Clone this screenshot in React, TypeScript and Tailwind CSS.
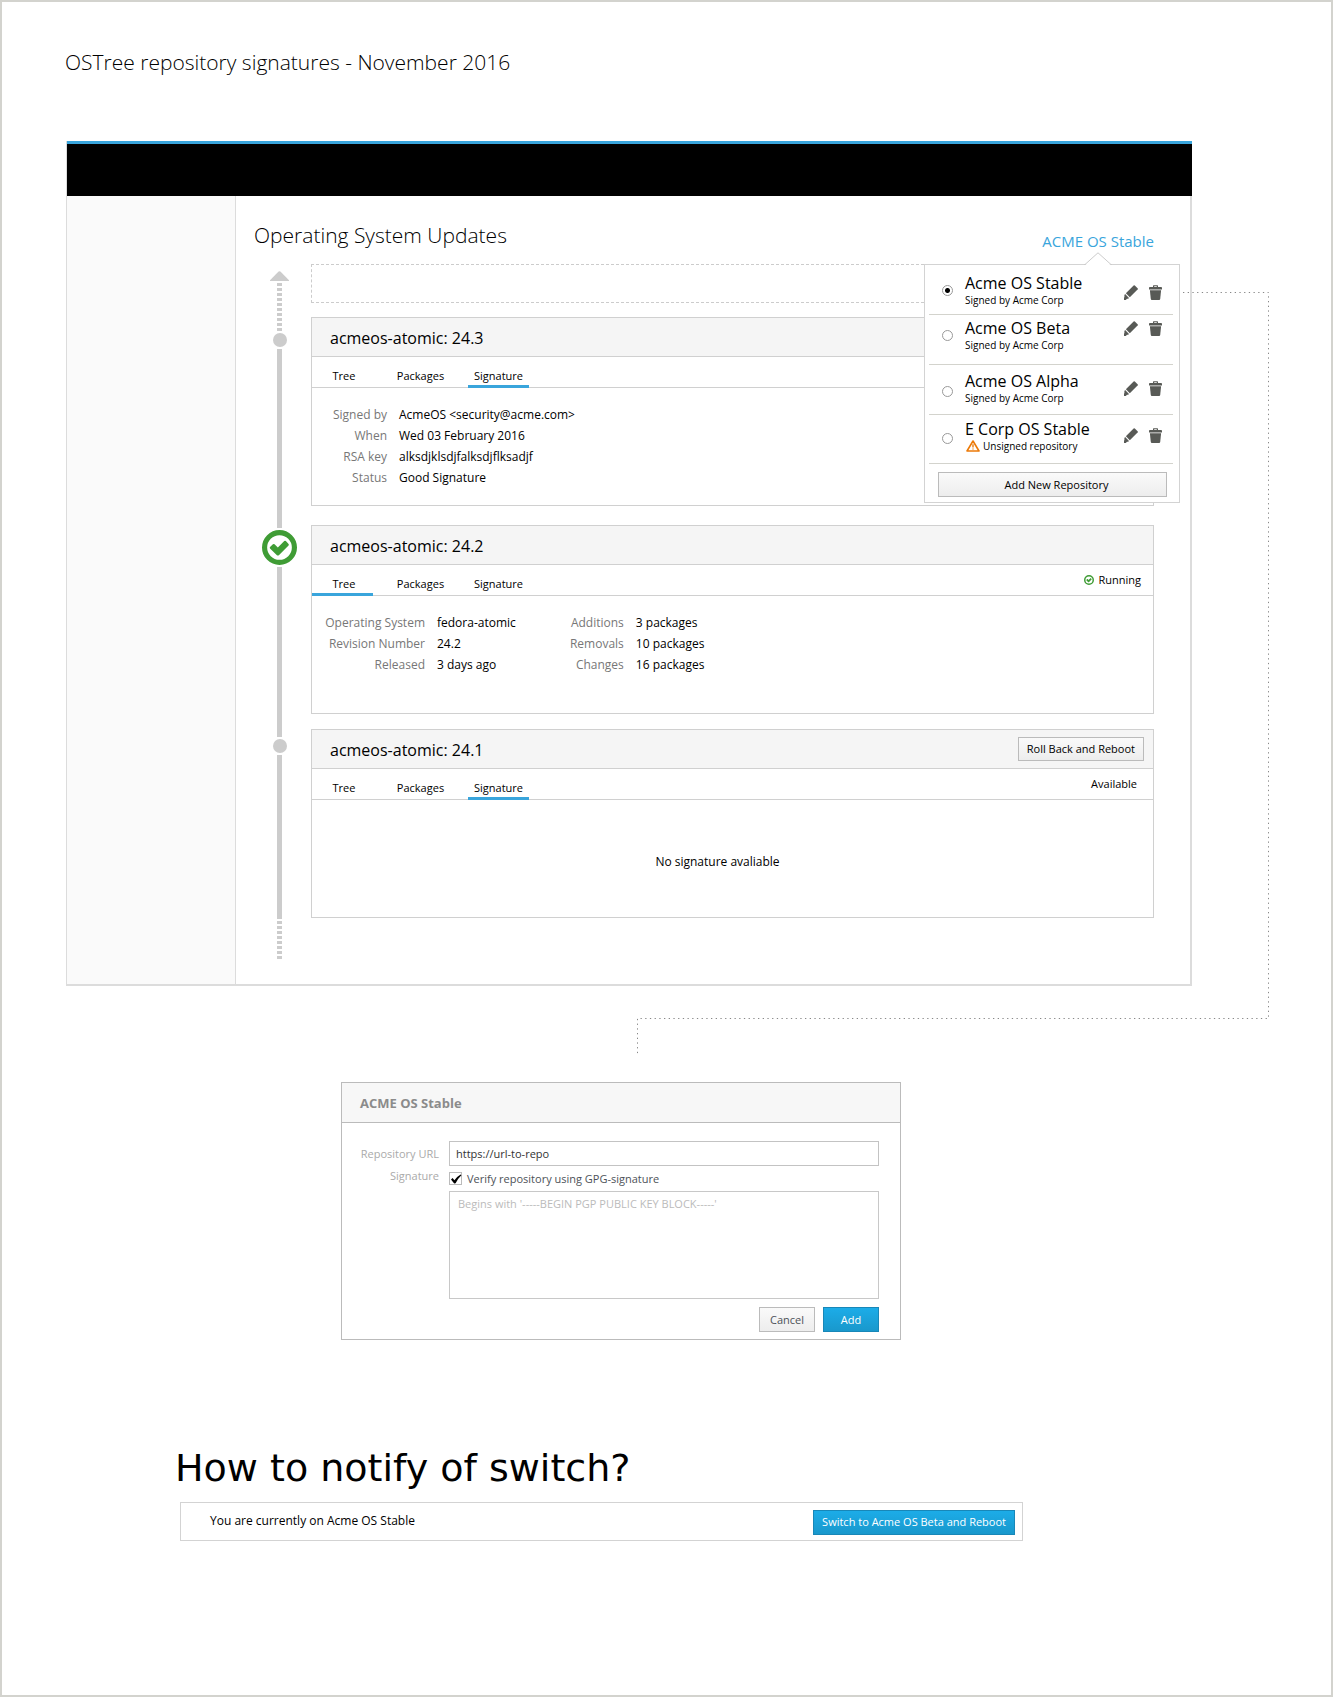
import { useState, type ReactNode } from 'react';

function CheckCircle({ className }: { className: string }) {
  return (
    <svg viewBox="0 0 34 34" className={className} aria-hidden="true">
      <circle cx="17" cy="17" r="14.5" fill="none" stroke="#3f9c35" strokeWidth="5" />
      <path
        d="M7.8 16.6 L10.6 13.8 Q11.4 13.2 12.2 13.8 L15.4 16.9 L21.6 10.8 Q22.4 10.2 23.2 10.8 L25.8 13.5 Q26.4 14.2 25.8 15 L16.4 24.5 Q15.4 25.2 14.5 24.5 L7.8 18 Q7.2 17.3 7.8 16.6Z"
        fill="#3f9c35"
      />
    </svg>
  );
}

function PencilIcon() {
  return (
    <svg viewBox="0 0 14 15" className="h-[15px] w-[14px]" fill="#585a56" aria-hidden="true">
      <path d="M9.6 .5 Q10.2 0 10.8 .5 L13.6 3.2 Q14.1 3.8 13.6 4.4 L5.8 12.2 L1.9 8.3Z" />
      <path d="M1.1 9.1 L5 13 L4.2 13.7 L3 13.7 L1.8 14.9 L0 14.9 L0 12.6 L.4 12.2 L.4 9.9Z" />
    </svg>
  );
}

function TrashIcon() {
  return (
    <svg viewBox="0 0 13 15" className="h-[15px] w-[13px]" fill="#585a56" aria-hidden="true">
      <path d="M4 2 V.9 Q4 .3 4.6 .3 H8.4 Q9 .3 9 .9 V2 H12.2 Q13 2 13 3 V4.4 H0 V3 Q0 2 .8 2Z M5.2 2 H7.8 V1.3 H5.2Z" fillRule="evenodd" />
      <path d="M.9 5.2 H12.1 L11.2 14 Q11 15 10.2 15 H2.8 Q2 15 1.8 14Z" />
    </svg>
  );
}

function WarningIcon() {
  return (
    <svg viewBox="0 0 14 12" className="h-3 w-3.5" aria-hidden="true">
      <path d="M7 1 L13 11 H1Z" fill="none" stroke="#ec7a08" strokeWidth="1.6" strokeLinejoin="round" />
      <path d="M7 4.2 V7.6 M7 8.4 V9.6" stroke="#ec7a08" strokeWidth="1.4" />
    </svg>
  );
}

const tabs = [
  { name: 'Tree', cell: 'w-[61px] pl-[3px]' },
  { name: 'Packages', cell: 'w-[95px]' },
  { name: 'Signature', cell: 'w-[61px]' },
];

function Card({
  version,
  active,
  action,
  status,
  className = '',
  children,
}: {
  version: string;
  active: string;
  action?: ReactNode;
  status?: ReactNode;
  className?: string;
  children: ReactNode;
}) {
  return (
    <article className={`flex min-h-[189px] flex-col border border-[#d0d0d0] bg-white ${className}`}>
      <header className="flex h-[39px] items-center justify-between border-b border-[#d0d0d0] bg-[#f5f5f5] pl-[18px] pr-[9px]">
        <h3 className="pt-0.5 text-base leading-6">acmeos-atomic: {version}</h3>
        {action}
      </header>
      <div className="flex h-[31px] items-stretch border-b border-[#d0d0d0]">
        <div role="tablist" className="flex">
          {tabs.map((tab) => (
            <button
              key={tab.name}
              type="button"
              role="tab"
              aria-selected={tab.name === active}
              className={`${tab.cell} -mb-px border-b-[3px] pt-[9px] text-[11px] leading-4 ${
                tab.name === active ? 'border-[#39a5dc]' : 'border-transparent'
              }`}
            >
              {tab.name}
            </button>
          ))}
        </div>
        <div className="ml-auto flex items-center pb-px text-[11px] leading-4">{status}</div>
      </div>
      {children}
    </article>
  );
}

function Facts({ rows, labelWidth }: { rows: [string, string][]; labelWidth: string }) {
  return (
    <dl className="text-xs leading-[21px]">
      {rows.map(([label, value]) => (
        <div key={label} className="flex gap-3">
          <dt className={`${labelWidth} shrink-0 text-right text-[#777]`}>{label}</dt>
          <dd className="whitespace-nowrap">{value}</dd>
        </div>
      ))}
    </dl>
  );
}

const repositories = [
  { name: 'Acme OS Stable', signed: true, row: 'h-[50px] pt-2', radio: 'mt-3', icons: 'mt-3' },
  { name: 'Acme OS Beta', signed: true, row: 'h-[50px] pt-[3px]', radio: 'mt-3', icons: 'mt-[3px]' },
  { name: 'Acme OS Alpha', signed: true, row: 'h-[50px] pt-[6px]', radio: 'mt-[15px]', icons: 'mt-[10px]' },
  { name: 'E Corp OS Stable', signed: false, row: 'h-[49px] pt-1', radio: 'mt-[14px]', icons: 'mt-[9px]' },
];

function RepositoryMenu() {
  const [selected, setSelected] = useState('Acme OS Stable');
  return (
    <div className="absolute -right-[26px] top-full z-10 mt-[11px] w-64 border border-[#d3d3d3] bg-white px-1 pb-[5px]">
      <svg viewBox="0 0 28 14" className="absolute -top-[13px] right-[67px] h-3.5 w-7" aria-hidden="true">
        <path d="M1 13.5 L14 .8 L27 13.5 V14 H1Z" fill="#fff" />
        <path d="M0 12.5 H1 L14 .8 L27 12.5 H28" fill="none" stroke="#ccc" />
      </svg>
      <ul>
        {repositories.map((repo) => (
          <li key={repo.name} className={`mr-0.5 flex items-start border-b border-[#d3d3cd] pl-[13px] pr-[11px] ${repo.row}`}>
            <label className="flex flex-1 items-start">
              <input
                type="radio"
                name="repository"
                checked={selected === repo.name}
                onChange={() => setSelected(repo.name)}
                className={`${repo.radio} mr-3 size-[11px] shrink-0 appearance-none rounded-full border border-[#999] bg-white checked:bg-[radial-gradient(circle,#000_0_2px,#fff_3px)]`}
              />
              <span className="block whitespace-nowrap">
                <span className="block text-base leading-5">{repo.name}</span>
                {repo.signed ? (
                  <span className="block text-[10px] leading-[14px]">Signed by Acme Corp</span>
                ) : (
                  <span className="flex items-center gap-[3px] pl-px text-[10px] leading-[14px]">
                    <WarningIcon />
                    Unsigned repository
                  </span>
                )}
              </span>
            </label>
            <span className={`flex gap-[11px] ${repo.icons}`}>
              <button type="button" aria-label={`Edit ${repo.name}`}>
                <PencilIcon />
              </button>
              <button type="button" aria-label={`Delete ${repo.name}`}>
                <TrashIcon />
              </button>
            </span>
          </li>
        ))}
      </ul>
      <button
        type="button"
        className="ml-[9px] mt-2 block h-[25px] w-[229px] border border-[#bbb] bg-linear-to-b from-[#fafafa] to-[#ededed] pl-2 text-[11px] leading-4"
      >
        Add New Repository
      </button>
    </div>
  );
}

function Timeline() {
  const dashes = 'w-[5px] bg-[repeating-linear-gradient(to_bottom,#ccc_0_3px,transparent_3px_5px)]';
  return (
    <div className="flex w-[51px] shrink-0 flex-col items-center pt-[7px]" aria-hidden="true">
      <svg viewBox="0 0 19 10" className="h-2.5 w-[19px]">
        <path d="M8.6 .5 Q9.5 0 10.4 .5 L19 9.2 V10 H0 V9.2Z" fill="#ccc" />
      </svg>
      <div className={`mt-0.5 h-12 ${dashes}`} />
      <div className="my-0.5 size-3.5 rounded-full bg-[#ccc]" />
      <div className="h-[179px] w-[5px] bg-[#ccc]" />
      <CheckCircle className="my-0.5 size-[35px]" />
      <div className="h-[170px] w-[5px] bg-[#ccc]" />
      <div className="my-0.5 size-3.5 rounded-full bg-[#ccc]" />
      <div className="h-[164px] w-[5px] bg-[#ccc]" />
      <div className={`mt-0.5 h-[39px] ${dashes}`} />
    </div>
  );
}

export default function App() {
  const [verify, setVerify] = useState(true);
  const [url, setUrl] = useState('https://url-to-repo');
  return (
    <main className="min-h-screen border-2 border-[#d3d3ce] bg-white pt-[45px] font-['Open_Sans',sans-serif] text-black">
      <h1 className="ml-[63px] text-[21px] font-light leading-[30px]">OSTree repository signatures - November 2016</h1>

      <section className="relative ml-16 mr-[139px] mt-16 border-b-2 border-l border-r-2 border-[#dcdcdc]">
        <div className="-mr-0.5 h-[55px] border-t-[3px] border-[#39a5dc] bg-black" />
        <div className="flex">
          <nav className="w-[169px] shrink-0 border-r border-[#dcdcdc] bg-[#fafafa]" />
          <div className="min-w-0 flex-1 pb-6 pl-[18px] pr-9">
            <div className="flex h-[68px] items-end justify-between">
              <h2 className="mb-[17px] text-[21px] font-light leading-6">Operating System Updates</h2>
              <div className="relative mb-[11px]">
                <a href="#repositories" className="block text-[15px] leading-6 text-[#39a5dc]">
                  ACME OS Stable
                </a>
                <RepositoryMenu />
              </div>
            </div>
            <div className="flex items-start gap-1.5">
              <Timeline />
              <div className="min-w-0 flex-1">
                <div className="h-[39px] border border-dashed border-[#ccc]" />
                <Card version="24.3" active="Signature" className="mt-3.5">
                  <div className="pt-4">
                    <Facts
                      labelWidth="w-[75px]"
                      rows={[
                        ['Signed by', 'AcmeOS <security@acme.com>'],
                        ['When', 'Wed 03 February 2016'],
                        ['RSA key', 'alksdjklsdjfalksdjflksadjf'],
                        ['Status', 'Good Signature'],
                      ]}
                    />
                  </div>
                </Card>
                <Card
                  version="24.2"
                  active="Tree"
                  className="mt-[19px]"
                  status={
                    <span className="mr-3 flex items-center gap-1">
                      <CheckCircle className="size-2.5" />
                      Running
                    </span>
                  }
                >
                  <div className="flex gap-[54px] pt-4">
                    <Facts
                      labelWidth="w-[113px]"
                      rows={[
                        ['Operating System', 'fedora-atomic'],
                        ['Revision Number', '24.2'],
                        ['Released', '3 days ago'],
                      ]}
                    />
                    <Facts
                      labelWidth="w-[54px]"
                      rows={[
                        ['Additions', '3 packages'],
                        ['Removals', '10 packages'],
                        ['Changes', '16 packages'],
                      ]}
                    />
                  </div>
                </Card>
                <Card
                  version="24.1"
                  active="Signature"
                  className="mt-[15px]"
                  action={
                    <button
                      type="button"
                      className="h-6 border border-[#bbb] bg-linear-to-b from-[#fafafa] to-[#ededed] px-2 text-[11px] leading-4"
                    >
                      Roll Back and Reboot
                    </button>
                  }
                  status={<span className="mr-4">Available</span>}
                >
                  <p className="flex flex-1 items-center justify-center pr-[30px] pt-[7px] text-xs">No signature avaliable</p>
                </Card>
              </div>
            </div>
          </div>
        </div>
        <svg
          viewBox="0 0 632 763"
          className="pointer-events-none absolute -right-[79px] top-[151px] h-[763px] w-[632px]"
          fill="none"
          stroke="#888"
          strokeDasharray="1.3 3.4"
          aria-hidden="true"
        >
          <path d="M546 .5 H631.5 V726.5 H.5 V763" />
        </svg>
      </section>

      <form
        onSubmit={(event) => event.preventDefault()}
        className="ml-[339px] mt-24 w-[560px] border border-[#bbb] pb-[7px] text-[11px] leading-4"
      >
        <h2 className="flex h-10 items-center border-b border-[#bbb] bg-[#f7f7f7] pl-[18px] text-[13px] font-bold text-[#8b8b8b]">
          ACME OS Stable
        </h2>
        <div className="grid grid-cols-[97px_1fr] gap-x-[10px] pr-[21px] pt-[18px]">
          <label htmlFor="url" className="pt-[5px] text-right text-[#aaa]">
            Repository URL
          </label>
          <input
            id="url"
            type="text"
            value={url}
            onChange={(event) => setUrl(event.target.value)}
            className="h-[25px] border border-[#c3c3c3] px-1.5 text-[#333] outline-none"
          />
          <span className="pt-0.5 text-right text-[#aaa]">Signature</span>
          <label className="flex h-[25px] items-center gap-[5px] text-[#4d5258]">
            <span className="relative size-[13px]">
              <input
                type="checkbox"
                checked={verify}
                onChange={(event) => setVerify(event.target.checked)}
                className="block size-[13px] appearance-none border border-[#bbb] bg-white"
              />
              {verify && (
                <svg viewBox="0 0 13 13" className="pointer-events-none absolute inset-0" aria-hidden="true">
                  <path d="M2 7.5 L3.6 6 L5.4 8.2 Q8 4.4 11.6 2.4 L12.4 3.2 Q8.6 6.8 6.6 11.2 L5.2 11.6Z" fill="#000" />
                </svg>
              )}
            </span>
            Verify repository using GPG-signature
          </label>
          <textarea
            aria-label="Public key"
            placeholder="Begins with '-----BEGIN PGP PUBLIC KEY BLOCK-----'"
            className="col-start-2 block h-[108px] resize-none border border-[#c8c8c8] px-2 py-1 outline-none placeholder:text-[#bbb]"
          />
        </div>
        <div className="mt-2 flex justify-end gap-2 pr-[21px]">
          <button type="button" className="h-[25px] w-14 border border-[#bbb] bg-linear-to-b from-[#fafafa] to-[#ededed] text-[#4d5258]">
            Cancel
          </button>
          <button type="submit" className="h-[25px] w-14 border border-[#1887b8] bg-linear-to-b from-[#1cace8] to-[#1998cc] text-white">
            Add
          </button>
        </div>
      </form>

      <h2 className="ml-[173px] mt-[106px] font-['DejaVu_Sans',sans-serif] text-[38px] leading-[44px]">How to notify of switch?</h2>
      <section className="ml-[178px] mr-[308px] mt-3 flex h-[39px] items-center justify-between border border-[#d3d3d3] pl-[29px] pr-[7px] text-xs">
        <p className="pb-0.5">You are currently on Acme OS Stable</p>
        <button
          type="button"
          className="mt-0.5 h-[25px] border border-[#1887b8] bg-linear-to-b from-[#1cace8] to-[#1998cc] px-2 text-[11px] text-white"
        >
          Switch to Acme OS Beta and Reboot
        </button>
      </section>
    </main>
  );
}
